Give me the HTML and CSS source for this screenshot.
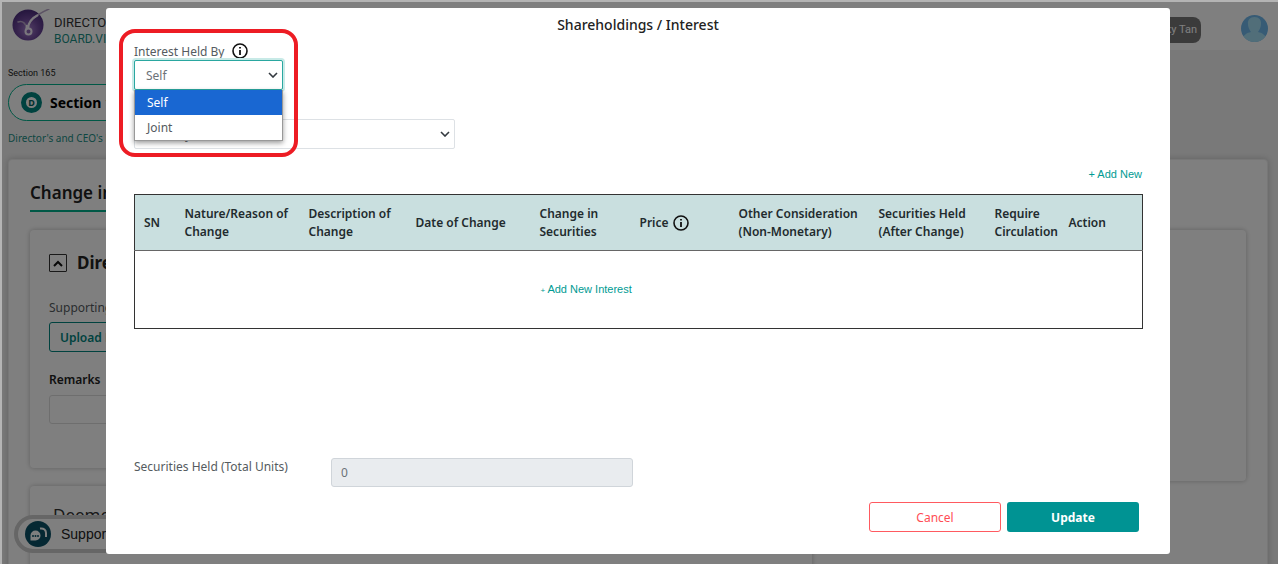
FILE: index.html
```html
<!DOCTYPE html>
<html lang="en">
<head>
  <meta charset="UTF-8" />
  <meta name="viewport" content="width=device-width, initial-scale=1.0"/>
  <title>Shareholdings / Interest</title>
  <link rel="stylesheet" href="styles.css">
</head>
<body>
  <div class="app">
    <header class="topbar">
      <svg class="logo" width="40" height="34" viewBox="0 0 40 34">
        <defs>
          <radialGradient id="orb" cx="50%" cy="65%" r="60%">
            <stop offset="0" stop-color="#a67fcc"/>
            <stop offset="0.6" stop-color="#6c469a"/>
            <stop offset="1" stop-color="#4f3080"/>
          </radialGradient>
        </defs>
        <circle cx="16" cy="16" r="15.5" fill="url(#orb)"/>
        <path d="M6 13 C11 11 14 15 15 20 C17 12 23 6 37 0" fill="none" stroke="#b9a6c9" stroke-width="1.500" stroke-linecap="round"/>
        <path d="M26 6 C20 9 16 14 16 20" fill="none" stroke="#f4eefa" stroke-width="2.200"/>
        <path d="M15 16 L14 23" stroke="#f4eefa" stroke-width="2"/>
        <circle cx="16.500" cy="22.500" r="3" fill="#8d66b4" stroke="#f4eefa" stroke-width="2"/>
      </svg>
      <div class="brand">
        <span>DIRECTOR</span>
        <span class="brand-sub">BOARD.VIEW</span>
      </div>
      <span class="user-name">Becky Tan</span>
      <svg class="avatar" width="27" height="27" viewBox="0 0 27 27">
        <defs><clipPath id="round"><circle cx="13.5" cy="13.5" r="13.5"/></clipPath></defs>
        <g clip-path="url(#round)">
          <rect width="27" height="27" fill="#6fb7ea"/>
          <path d="M13.5 2 C18 2 20.5 5 20 9 C20 13 17.500 16 17 17 C21 18 25 19 26 27 H1 C2 19 6 18 10 17 C9.500 16 7 13 7 9 C6.500 5 9 2 13.500 2 Z" fill="#a3dcf3"/>
        </g>
      </svg>
    </header>

    <main class="content">
      <div class="crumb">Section 165</div>
      <div class="section-pill"><span class="pill-icon">D</span>Section 165</div>
      <a class="notice-link" href="#">Director's and CEO's Notice</a>

      <section class="panel">
        <h1>Change in Interest</h1>
        <div class="columns">
          <div class="column">
            <div class="card">
              <h2>
                <button class="collapse" type="button" aria-label="Collapse">
                  <svg width="10" height="7" viewBox="0 0 10 7"><path d="M1 6 L5 2 L9 6" fill="none" stroke="#111" stroke-width="2"/></svg>
                </button>
                Direct Interest
              </h2>
              <p class="hint">Supporting Documents</p>
              <button class="upload" type="button">Upload Files</button>
              <label class="remarks-label" for="remarks">Remarks</label>
              <input class="remarks" id="remarks" type="text">
            </div>
            <div class="card card-deemed">Deemed Interest</div>
          </div>
          <div class="card card-side"></div>
        </div>
      </section>
    </main>

    <div class="support">
      <svg width="26" height="26" viewBox="0 0 26 26">
        <circle cx="13" cy="13" r="13" fill="#0a5066"/>
        <path d="M15 7.500 C19 7 21 9 21 12 V16" fill="none" stroke="#fff" stroke-width="2"/>
        <path d="M5.500 19.500 V14.500 A5 5 0 1 1 10.500 19.500 Z" fill="#fff"/>
        <g fill="#0a5066"><circle cx="8" cy="15" r="1"/><circle cx="10.500" cy="15" r="1"/><circle cx="13" cy="15" r="1"/></g>
      </svg>
      Support
    </div>
  </div>

  <div class="overlay">
    <form class="modal" role="dialog" aria-labelledby="modalTitle">
      <h2 class="modal-title" id="modalTitle">Shareholdings / Interest</h2>

      <div class="field held-by">
        <div class="label-row">
          <label for="heldBy">Interest Held By</label>
          <svg class="info" width="16" height="16" viewBox="0 0 16 16">
            <circle cx="8" cy="8" r="7" fill="none" stroke="#111" stroke-width="1.600"/>
            <path d="M8 7 V12 M8 4 V5.600" stroke="#111" stroke-width="1.800"/>
          </svg>
        </div>
        <div class="select-wrap">
          <select class="select select-open" id="heldBy">
            <option>Self</option>
            <option>Joint</option>
          </select>
          <svg class="chevron" width="10" height="6" viewBox="0 0 10 6"><path d="M1 1 L5 5 L9 1" fill="none" stroke="#343a40" stroke-width="1.600"/></svg>
          <ul class="menu">
            <li class="active">Self</li>
            <li>Joint</li>
          </ul>
        </div>
        <div class="highlight"></div>
      </div>

      <div class="select-wrap security">
        <select class="select" aria-label="Security">
          <option>Security</option>
        </select>
        <svg class="chevron" width="10" height="6" viewBox="0 0 10 6"><path d="M1 1 L5 5 L9 1" fill="none" stroke="#343a40" stroke-width="1.600"/></svg>
      </div>

      <button class="add-new" type="button">+ Add New</button>

      <table class="changes">
        <colgroup>
          <col class="c-sn"><col class="c-nature"><col class="c-desc"><col class="c-date"><col class="c-change">
          <col class="c-price"><col class="c-other"><col class="c-held"><col class="c-circ"><col class="c-action">
        </colgroup>
        <thead>
          <tr>
            <th>SN</th>
            <th>Nature/Reason of<br>Change</th>
            <th>Description of<br>Change</th>
            <th>Date of Change</th>
            <th>Change in<br>Securities</th>
            <th>
              <span class="th-info">Price
                <svg class="info" width="16" height="16" viewBox="0 0 16 16">
                  <circle cx="8" cy="8" r="7" fill="none" stroke="#111" stroke-width="1.600"/>
                  <path d="M8 7 V12 M8 4 V5.600" stroke="#111" stroke-width="1.800"/>
                </svg>
              </span>
            </th>
            <th>Other Consideration<br>(Non-Monetary)</th>
            <th>Securities Held<br>(After Change)</th>
            <th>Require<br>Circulation</th>
            <th>Action</th>
          </tr>
        </thead>
        <tbody>
          <tr>
            <td colspan="4"></td>
            <td colspan="6"><button class="add-interest" type="button"><small>+ </small>Add New Interest</button></td>
          </tr>
        </tbody>
      </table>

      <div class="total">
        <label for="total">Securities Held (Total Units)</label>
        <input id="total" type="text" value="0" readonly>
      </div>

      <div class="actions">
        <button class="btn cancel" type="button">Cancel</button>
        <button class="btn update" type="submit">Update</button>
      </div>
    </form>
  </div>
</body>
</html>
```
FILE: styles.css
```css
* {
  box-sizing: border-box;
}
html {
  background: #b4b4b4;
}
body {
  margin: 0;
  padding: 2px 0 0 2px;
  height: 100vh;
  overflow: hidden;
  font-family: "Noto Sans", "Open Sans", sans-serif;
  font-size: 12px;
  color: #555b60;
}
button, input, select {
  font: inherit;
}

/* page behind the dialog */
.app {
  height: 100%;
  overflow: hidden;
  background: #f2f2f2;
}
.topbar {
  display: flex;
  align-items: center;
  height: 48px;
  padding: 0 10px;
  background: #fff;
}
.brand {
  display: flex;
  flex-direction: column;
  flex: 1;
  margin-left: 2px;
  padding-top: 10px;
  font-family: Roboto, sans-serif;
  font-size: 13px;
  line-height: 16px;
  color: #333;
}
.brand-sub {
  font-size: 12px;
  color: #1b8f85;
}
.user-name {
  padding: 0 4px;
  margin: 8px 40px 0 0;
  border-radius: 8px;
  background: #777;
  color: #fff;
  font-family: Roboto, sans-serif;
  font-size: 11px;
  line-height: 26px;
}
.avatar {
  margin-top: 4px;
}
.content {
  padding: 16px 10px 0 6px;
}
.crumb {
  font-family: Roboto, sans-serif;
  font-size: 9px;
  line-height: 14px;
  color: #222;
}
.section-pill {
  display: flex;
  align-items: center;
  gap: 8px;
  width: 60%;
  height: 37px;
  margin-top: 4px;
  padding-left: 12px;
  border: 1px solid #00b08c;
  border-radius: 19px;
  background: #fff;
  color: #000;
  font-size: 14px;
  font-weight: 700;
}
.pill-icon {
  width: 21px;
  height: 21px;
  border: 5px solid #00857f;
  border-radius: 50%;
  color: #00605c;
  font-size: 9px;
  line-height: 11px;
  text-align: center;
}
.notice-link {
  display: block;
  margin-top: 9px;
  color: #1b8f85;
  font-size: 10px;
  line-height: 16px;
  text-decoration: none;
}
.panel {
  margin-top: 13px;
  padding: 18px 21px;
  border: 1px solid #eee;
  border-radius: 4px;
  background: #fff;
  box-shadow: 0 0 6px rgba(0,0,0,0.2);
}
.panel h1 {
  width: 60%;
  margin: 0 0 18px;
  padding-bottom: 2px;
  border-bottom: 2px solid #00b08c;
  color: #222;
  font-size: 17px;
  font-weight: 600;
  line-height: 30px;
}
.columns {
  display: grid;
  grid-template-columns: 783fr 418fr;
  align-items: start;
  gap: 16px;
}
.column {
  display: flex;
  flex-direction: column;
  gap: 18px;
}
.card {
  min-height: 238px;
  padding: 17px 19px;
  border-radius: 4px;
  background: #fff;
  box-shadow: 0 0 5px rgba(0,0,0,0.25);
}
.card h2 {
  display: flex;
  align-items: center;
  gap: 10px;
  margin: 0 0 20px;
  color: #222;
  font-size: 17px;
  font-weight: 700;
  line-height: 32px;
}
.card-side {
  min-height: 251px;
}
.card-deemed {
  padding-left: 23px;
  color: #333;
  font-size: 17px;
}
.collapse {
  display: flex;
  align-items: center;
  justify-content: center;
  width: 18px;
  height: 18px;
  padding: 0;
  border: 1px solid #333;
  border-radius: 1px;
  background: #fff;
}
.hint {
  margin: 0 0 6px;
  line-height: 17px;
}
.upload {
  height: 30px;
  padding: 0 10px;
  border: 1px solid #00857f;
  border-radius: 3px;
  background: #fff;
  color: #00857f;
  font-weight: 600;
}
.remarks-label {
  display: block;
  margin: 19px 0 7px;
  color: #222;
  font-weight: 600;
  line-height: 17px;
}
.remarks {
  width: 100%;
  height: 29px;
  border: 1px solid #ddd;
  border-radius: 3px;
}
.support {
  position: fixed;
  left: 14px;
  bottom: 11px;
  display: flex;
  align-items: center;
  gap: 10px;
  padding: 2px 20px 2px 7px;
  border: 4px solid #ccc;
  border-radius: 20px;
  background: #fff;
  color: #222;
  font-family: "Liberation Sans", sans-serif;
  font-size: 14px;
}

/* dialog */
.overlay {
  position: fixed;
  inset: 2px 0 0 2px;
  padding: 6px 108px 10px 104px;
  background: rgba(0,0,0,0.5);
}
.modal {
  padding: 5px 28px 22px;
  border-radius: 3px;
  background: #fff;
}
.modal-title {
  margin: 0;
  color: #222;
  font-size: 14px;
  font-weight: 500;
  line-height: 24px;
  text-align: center;
}
.field {
  position: relative;
  width: 149px;
  margin-top: 5px;
}
.label-row {
  display: flex;
  align-items: center;
  gap: 8px;
  height: 18px;
}
.info {
  display: block;
  flex: none;
}
.select-wrap {
  position: relative;
}
.select {
  display: block;
  width: 100%;
  height: 30px;
  padding: 0 11px;
  appearance: none;
  border: 1px solid #dde1e5;
  border-radius: 2px;
  background: #fff;
  color: #6c7278;
}
.select-open {
  border-color: #2aa7a0;
  box-shadow: 0 0 0 2px #c8eae7;
}
.chevron {
  position: absolute;
  right: 5px;
  top: 12px;
}
.menu {
  position: absolute;
  z-index: 2;
  top: 30px;
  left: 0;
  width: 100%;
  margin: 0;
  padding: 0;
  border: 1px solid #999;
  border-top: none;
  background: #fff;
  box-shadow: 0 2px 5px rgba(0,0,0,0.4);
  list-style: none;
}
.menu li {
  padding-left: 12px;
  line-height: 25px;
}
.menu .active {
  background: #1967d2;
  color: #fff;
}
.highlight {
  position: absolute;
  z-index: 3;
  inset: -13px -15px -67px;
  border: 4px solid #ed1c24;
  border-radius: 16px;
  pointer-events: none;
}
.security {
  width: 321px;
  margin-top: 29px;
}
.add-new, .add-interest {
  padding: 0;
  border: none;
  background: none;
  color: #009b93;
  font-family: "Liberation Sans", sans-serif;
  font-size: 11px;
  line-height: 16px;
  cursor: pointer;
}
.add-new {
  display: block;
  margin: 17px 0 12px auto;
}
.add-interest small {
  font-size: 8px;
}
.changes {
  width: 100%;
  border: 1px solid #333;
  border-collapse: collapse;
  table-layout: fixed;
}
.changes th {
  height: 56px;
  padding: 0 0 0 9px;
  border-bottom: 1px solid #666;
  background: #c9dfdf;
  color: #222b2e;
  font-weight: 600;
  line-height: 18px;
  text-align: left;
  white-space: nowrap;
}
.changes td {
  height: 78px;
  padding: 0 0 0 10px;
}
.th-info {
  display: flex;
  align-items: center;
  gap: 4px;
}
.c-sn { width: 41px; }
.c-nature { width: 124px; }
.c-desc { width: 107px; }
.c-date { width: 124px; }
.c-change { width: 100px; }
.c-price { width: 99px; }
.c-other { width: 140px; }
.c-held { width: 116px; }
.c-circ { width: 74px; }
.c-action { width: 83px; }
.total {
  display: flex;
  margin-top: 129px;
}
.total label {
  width: 197px;
  line-height: 18px;
}
.total input {
  width: 302px;
  height: 29px;
  padding: 0 9px;
  border: 1px solid #d0d5da;
  border-radius: 3px;
  background: #e9ecef;
  color: #6c7278;
}
.actions {
  display: flex;
  justify-content: flex-end;
  gap: 6px;
  margin-top: 15px;
  padding-right: 3px;
}
.btn {
  width: 132px;
  height: 30px;
  border-radius: 3px;
  cursor: pointer;
}
.cancel {
  border: 1px solid #ff5a60;
  background: #fff;
  color: #ff4d55;
}
.update {
  border: none;
  background: #009393;
  color: #fff;
  font-weight: 700;
}
```
